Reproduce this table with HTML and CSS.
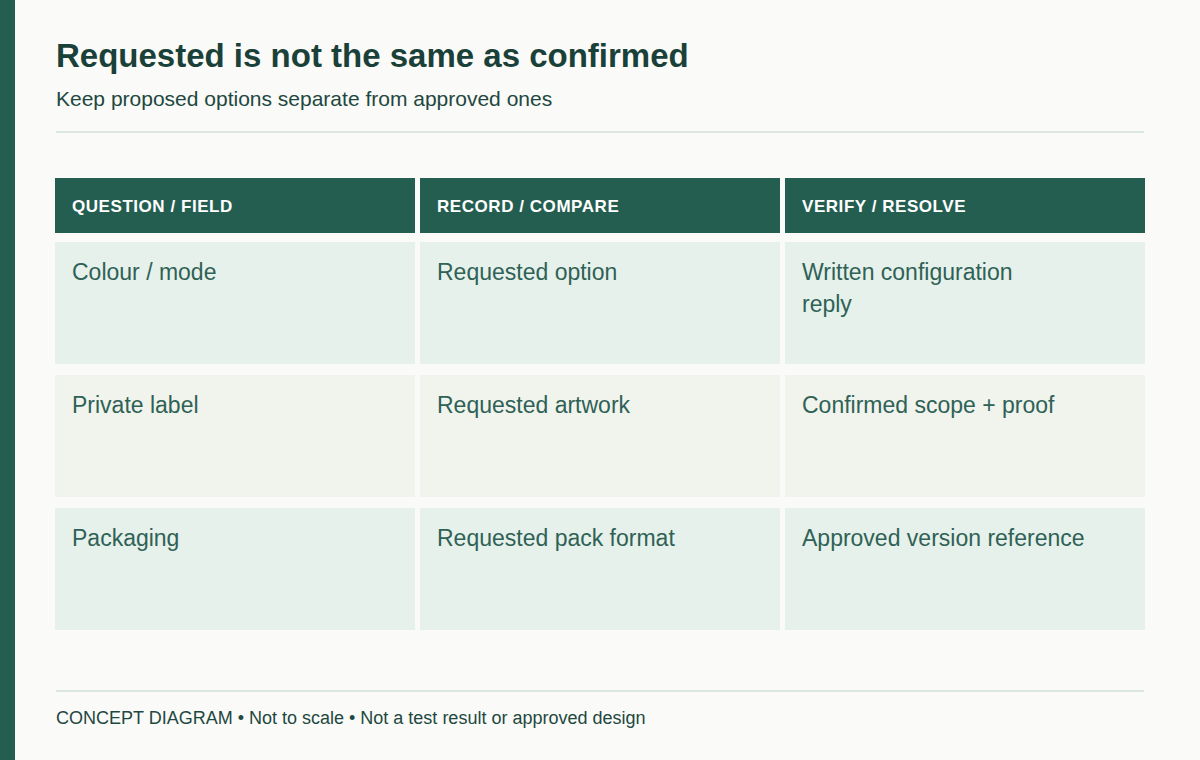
FILE: index.html
```html
<!DOCTYPE html>
<html lang="en">
<head>
<meta charset="utf-8">
<title>Requested is not the same as confirmed</title>
<link rel="stylesheet" href="styles.css">
</head>
<body>
<div class="page">
  <div class="accent"></div>
  <main class="main">
    <header class="head">
      <h1 class="title">Requested is not the same as confirmed</h1>
      <p class="subtitle">Keep proposed options separate from approved ones</p>
    </header>
    <hr class="rule rule-top">
    <section class="table">
      <div class="row row-head">
        <div class="cell th">QUESTION / FIELD</div>
        <div class="cell th">RECORD / COMPARE</div>
        <div class="cell th">VERIFY / RESOLVE</div>
      </div>
      <div class="row row-a">
        <div class="cell td">Colour / mode</div>
        <div class="cell td">Requested option</div>
        <div class="cell td">Written configuration<br>reply</div>
      </div>
      <div class="row row-b">
        <div class="cell td">Private label</div>
        <div class="cell td">Requested artwork</div>
        <div class="cell td">Confirmed scope + proof</div>
      </div>
      <div class="row row-a">
        <div class="cell td">Packaging</div>
        <div class="cell td">Requested pack format</div>
        <div class="cell td">Approved version reference</div>
      </div>
    </section>
    <hr class="rule rule-bottom">
    <p class="footnote">CONCEPT DIAGRAM • Not to scale • Not a test result or approved design</p>
  </main>
</div>
</body>
</html>
```

FILE: styles.css
```css
html, body {
  margin: 0;
  padding: 0;
}
body {
  background: #fafaf8;
  font-family: "Liberation Sans", Arial, sans-serif;
  color: #1c4239;
}
.page {
  display: flex;
  min-height: 760px;
}
.accent {
  width: 15px;
  flex: none;
  background: #245e51;
}
.main {
  flex: 1;
  padding: 36px 0 0 40px;
  width: 1090px;
  max-width: 1090px;
}
.title {
  margin: 0;
  font-size: 33px;
  line-height: 1.2;
  font-weight: 700;
  color: #1a4139;
  padding-left: 1px;
}
.subtitle {
  margin: 10px 0 0;
  font-size: 21px;
  line-height: 1.2;
  color: #1e4840;
  padding-left: 1px;
}
.rule {
  border: 0;
  height: 2px;
  background: #dce6e1;
  margin: 0 1px;
}
.rule-top {
  margin-top: 20px;
}
.table {
  margin-top: 45px;
  display: flex;
  flex-direction: column;
  gap: 11px;
}
.row {
  display: grid;
  grid-template-columns: repeat(3, 360px);
  column-gap: 5px;
}
.row-head {
  margin-bottom: -2px;
}
.th {
  height: 55px;
  box-sizing: border-box;
  display: flex;
  align-items: center;
  padding: 3px 17px 0;
  background: #245e51;
  color: #ffffff;
  font-weight: 700;
  font-size: 17px;
  letter-spacing: 0.55px;
}
.td {
  height: 122px;
  box-sizing: border-box;
  padding: 14px 17px;
  font-size: 23px;
  line-height: 32px;
  color: #2f6156;
}
.row-a .td {
  background: #e6f1eb;
}
.row-b .td {
  background: #f0f4ed;
}
.rule-bottom {
  margin-top: 60px;
}
.footnote {
  margin: 16px 0 0 1px;
  font-size: 18px;
  line-height: 1.2;
  color: #1e4840;
}
```
